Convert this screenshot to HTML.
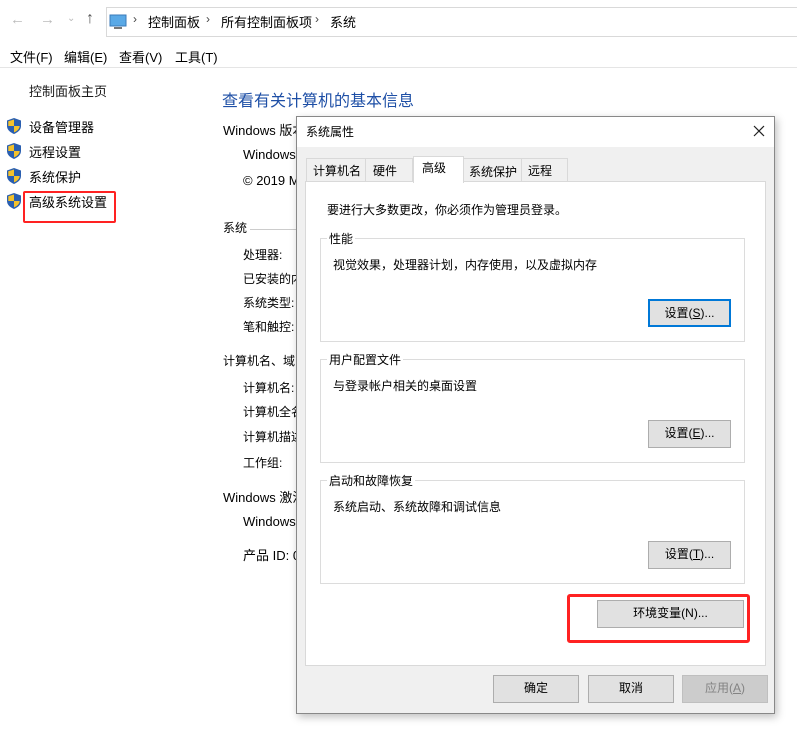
<!DOCTYPE html>
<html><head><meta charset="utf-8"><style>
*{margin:0;padding:0;box-sizing:border-box}
body{width:797px;height:730px;background:#fff;position:relative;overflow:hidden;font-family:"Liberation Sans","Noto Sans CJK SC",sans-serif;font-size:12px;color:#000}
.a{position:absolute;white-space:nowrap}
.btn{position:absolute;background:#e1e1e1;border:1px solid #adadad;text-align:center;font-size:12px;line-height:25px}
.grp{position:absolute;border:1px solid #dcdcdc}
.grp .lab{position:absolute;top:-9px;left:6px;background:#fff;padding:0 2px}
.shield{position:absolute;width:14px;height:16px}
</style></head><body>
<div class="a" style="left:10px;top:11px;color:#bbb;font-size:15px">←</div>
<div class="a" style="left:40px;top:11px;color:#bbb;font-size:15px">→</div>
<div class="a" style="left:67px;top:13px;color:#bbb;font-size:10px">⌄</div>
<div class="a" style="left:86px;top:10px;color:#555;font-size:16px">↑</div>
<div class="a" style="left:106px;top:7px;width:691px;height:30px;border:1px solid #d9d9d9;border-right:none"></div>
<svg class="a" style="left:109px;top:14px" width="18" height="16"><rect x="1" y="1" width="16" height="11" fill="#5aa9e6" stroke="#3a7ab8"/><rect x="5" y="13" width="8" height="2" fill="#777"/></svg>
<div class="a" style="left:133px;top:12px;font-size:12px;color:#444">›</div>
<div class="a" style="left:148px;top:12px;font-size:13px">控制面板</div>
<div class="a" style="left:206px;top:12px;font-size:12px;color:#444">›</div>
<div class="a" style="left:221px;top:12px;font-size:13px">所有控制面板项</div>
<div class="a" style="left:315px;top:12px;font-size:12px;color:#444">›</div>
<div class="a" style="left:330px;top:12px;font-size:13px">系统</div>
<div class="a" style="left:10px;top:47px;font-size:13px">文件(F)</div>
<div class="a" style="left:64px;top:47px;font-size:13px">编辑(E)</div>
<div class="a" style="left:119px;top:47px;font-size:13px">查看(V)</div>
<div class="a" style="left:175px;top:47px;font-size:13px">工具(T)</div>
<div class="a" style="left:0;top:67px;width:797px;height:1px;background:#e5e5e5"></div>
<div class="a" style="left:29px;top:81px;font-size:13px;color:#1a1a1a">控制面板主页</div>
<div class="a" style="left:29px;top:117px;font-size:13px">设备管理器</div>
<div class="a" style="left:29px;top:142px;font-size:13px">远程设置</div>
<div class="a" style="left:29px;top:167px;font-size:13px">系统保护</div>
<div class="a" style="left:29px;top:192px;font-size:13px">高级系统设置</div>
<svg class="shield" style="left:7px;top:118px" viewBox="0 0 14 16"><path d="M7 0L14 2.5V8C14 12 10.5 14.5 7 16C3.5 14.5 0 12 0 8V2.5Z" fill="#2a5fb0"/><path d="M7 1.5V8H1.3V3.3Z M7 8H12.7C12.5 11 10 13.2 7 14.4Z" fill="#f4c22c"/></svg>
<svg class="shield" style="left:7px;top:143px" viewBox="0 0 14 16"><path d="M7 0L14 2.5V8C14 12 10.5 14.5 7 16C3.5 14.5 0 12 0 8V2.5Z" fill="#2a5fb0"/><path d="M7 1.5V8H1.3V3.3Z M7 8H12.7C12.5 11 10 13.2 7 14.4Z" fill="#f4c22c"/></svg>
<svg class="shield" style="left:7px;top:168px" viewBox="0 0 14 16"><path d="M7 0L14 2.5V8C14 12 10.5 14.5 7 16C3.5 14.5 0 12 0 8V2.5Z" fill="#2a5fb0"/><path d="M7 1.5V8H1.3V3.3Z M7 8H12.7C12.5 11 10 13.2 7 14.4Z" fill="#f4c22c"/></svg>
<svg class="shield" style="left:7px;top:193px" viewBox="0 0 14 16"><path d="M7 0L14 2.5V8C14 12 10.5 14.5 7 16C3.5 14.5 0 12 0 8V2.5Z" fill="#2a5fb0"/><path d="M7 1.5V8H1.3V3.3Z M7 8H12.7C12.5 11 10 13.2 7 14.4Z" fill="#f4c22c"/></svg>
<div class="a" style="left:23px;top:191px;width:93px;height:32px;border:2px solid #f22;border-radius:2px"></div>
<div class="a" style="left:222px;top:87px;font-size:16px;color:#1e4fa6">查看有关计算机的基本信息</div>
<div class="a" style="left:223px;top:120px;font-size:13px">Windows 版本</div>
<div class="a" style="left:243px;top:147px;font-size:13px">Windows</div>
<div class="a" style="left:243px;top:173px;font-size:13px">© 2019 M</div>
<div class="a" style="left:223px;top:219px;font-size:12px">系统</div>
<div class="a" style="left:250px;top:229px;width:50px;height:1px;background:#ccc"></div>
<div class="a" style="left:243px;top:246px">处理器:</div>
<div class="a" style="left:243px;top:270px">已安装的内</div>
<div class="a" style="left:243px;top:294px">系统类型:</div>
<div class="a" style="left:243px;top:318px">笔和触控:</div>
<div class="a" style="left:223px;top:352px">计算机名、域</div>
<div class="a" style="left:243px;top:379px">计算机名:</div>
<div class="a" style="left:243px;top:403px">计算机全名</div>
<div class="a" style="left:243px;top:428px">计算机描述</div>
<div class="a" style="left:243px;top:454px">工作组:</div>
<div class="a" style="left:223px;top:487px;font-size:13px">Windows 激活</div>
<div class="a" style="left:243px;top:514px;font-size:13px">Windows</div>
<div class="a" style="left:243px;top:545px;font-size:13px">产品 ID: 0</div>
<div class="a" style="left:296px;top:116px;width:479px;height:598px;background:#f0f0f0;border:1px solid #888;box-shadow:2px 3px 8px rgba(0,0,0,.25)">
 <div class="a" style="left:0;top:0;width:477px;height:30px;background:#fff"></div>
 <div class="a" style="left:9px;top:6px;font-size:12px">系统属性</div>
 <svg class="a" style="left:456px;top:8px" width="12" height="12"><path d="M1 1L11 11M11 1L1 11" stroke="#222" stroke-width="1.2"/></svg>
 <div class="a" style="left:9px;top:41px;width:60px;height:24px;border:1px solid #d9d9d9;background:#f0f0f0;padding:3px 0 0 6px">计算机名</div>
 <div class="a" style="left:68px;top:41px;width:48px;height:24px;border:1px solid #d9d9d9;background:#f0f0f0;padding:3px 0 0 7px">硬件</div>
 <div class="a" style="left:165px;top:41px;width:60px;height:24px;border:1px solid #d9d9d9;background:#f0f0f0;padding:4px 0 0 6px">系统保护</div>
 <div class="a" style="left:224px;top:41px;width:47px;height:24px;border:1px solid #d9d9d9;background:#f0f0f0;padding:3px 0 0 6px">远程</div>
 <div class="a" style="left:8px;top:64px;width:461px;height:485px;background:#fff;border:1px solid #d9d9d9"></div>
 <div class="a" style="left:116px;top:39px;width:51px;height:27px;background:#fff;border:1px solid #d9d9d9;border-bottom:none;padding:2px 0 0 8px">高级</div>
 <div class="a" style="left:30px;top:84px">要进行大多数更改，你必须作为管理员登录。</div>
 <div class="grp" style="left:23px;top:121px;width:425px;height:104px"><span class="lab">性能</span><span class="a" style="left:12px;top:17px">视觉效果，处理器计划，内存使用，以及虚拟内存</span></div>
 <div class="btn" style="left:351px;top:182px;width:83px;height:28px;border:2px solid #0078d7;line-height:24px">设置(<u>S</u>)...</div>
 <div class="grp" style="left:23px;top:242px;width:425px;height:104px"><span class="lab">用户配置文件</span><span class="a" style="left:12px;top:17px">与登录帐户相关的桌面设置</span></div>
 <div class="btn" style="left:351px;top:303px;width:83px;height:28px">设置(<u>E</u>)...</div>
 <div class="grp" style="left:23px;top:363px;width:425px;height:104px"><span class="lab">启动和故障恢复</span><span class="a" style="left:12px;top:17px">系统启动、系统故障和调试信息</span></div>
 <div class="btn" style="left:351px;top:424px;width:83px;height:28px">设置(<u>T</u>)...</div>
 <div class="btn" style="left:300px;top:483px;width:147px;height:28px">环境变量(N)...</div>
 <div class="a" style="left:270px;top:477px;width:183px;height:49px;border:3px solid #f22;border-radius:3px"></div>
 <div class="btn" style="left:196px;top:558px;width:86px;height:28px">确定</div>
 <div class="btn" style="left:291px;top:558px;width:86px;height:28px">取消</div>
 <div class="btn" style="left:385px;top:558px;width:86px;height:28px;background:#ccc;border-color:#bfbfbf;color:#838383">应用(<u>A</u>)</div>
</div>
</body></html>
